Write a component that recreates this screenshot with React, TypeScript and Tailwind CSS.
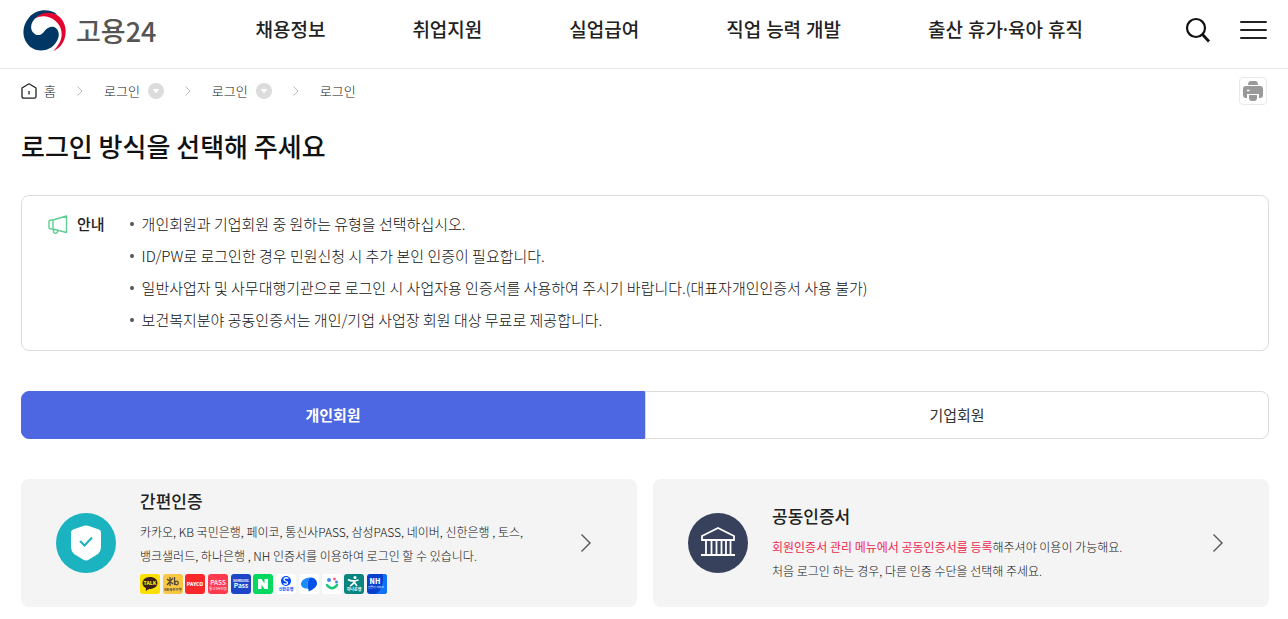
import React, { useState } from 'react';

const NAV_ITEMS = ['채용정보', '취업지원', '실업급여', '직업 능력 개발', '출산 휴가·육아 휴직'];

const NOTICES = [
  '개인회원과 기업회원 중 원하는 유형을 선택하십시오.',
  'ID/PW로 로그인한 경우 민원신청 시 추가 본인 인증이 필요합니다.',
  '일반사업자 및 사무대행기관으로 로그인 시 사업자용 인증서를 사용하여 주시기 바랍니다.(대표자개인인증서 사용 불가)',
  '보건복지분야 공동인증서는 개인/기업 사업장 회원 대상 무료로 제공합니다.',
];

const TABS = ['개인회원', '기업회원'];

const Emblem = () => (
  <svg viewBox="0 0 128 122" className="h-[41px] w-[43px]" aria-hidden="true">
    <path
      fill="#003764"
      d="M100 12C80-4 40-4 18 22C-6 50-4 88 22 110C46 128 80 122 96 100C108 84 110 68 100 56C90 46 76 50 66 60C56 74 46 78 36 72C22 64 20 46 32 30C46 12 76 6 100 14Z"
    />
    <path
      fill="#e4032e"
      d="M36 25C54 6 80 4 100 14C124 28 132 58 124 84C118 102 108 114 90 122C112 100 120 78 112 54C102 26 66 8 36 25Z"
    />
  </svg>
);

const ChevronSmall = () => (
  <svg viewBox="0 0 6 10" className="h-[10px] w-[6px]" fill="none" stroke="#bbb" aria-hidden="true">
    <path d="M.5 .5L5 5L.5 9.5" />
  </svg>
);

const ChevronLarge = () => (
  <svg viewBox="0 0 11 20" className="h-5 w-[11px] shrink-0" fill="none" stroke="#555" strokeWidth="1.4" aria-hidden="true">
    <path d="M1.500 1.500L10 10L1.500 18.500" />
  </svg>
);

const DropButton = ({ label }: { label: string }) => (
  <button type="button" aria-label={label} className="size-4 rounded-full bg-[#dcdcdc]">
    <svg viewBox="0 0 16 16" aria-hidden="true">
      <path fill="#fff" stroke="#fff" strokeLinejoin="round" d="M5.500 6.500H10.500L8 9.800Z" />
    </svg>
  </button>
);

const Header = () => (
  <header className="border-b border-[#e9e9e9]">
    <div className="flex h-[68px] items-start pl-[23px] pr-[21px] pt-[10px]">
      <a href="#" className="flex items-center gap-[10px]">
        <Emblem />
        <span className="text-[27px] leading-[38px] font-medium text-[#555]">고용24</span>
      </a>
      <nav className="ml-[99px] flex gap-[87px] font-['Noto_Sans','Noto_Sans_CJK_KR',sans-serif]">
        {NAV_ITEMS.map((item) => (
          <a key={item} href="#" className="text-[19px] leading-[41px] font-medium whitespace-nowrap text-[#222]">
            {item}
          </a>
        ))}
      </nav>
      <div className="ml-auto flex h-10 items-center gap-[29px]">
        <button type="button" aria-label="검색">
          <svg viewBox="0 0 26 26" className="size-[26px]" fill="none" stroke="#111" strokeWidth="2.200">
            <circle cx="11" cy="11" r="9" />
            <path d="M17.500 17.500L24 24.500" strokeWidth="2.800" />
          </svg>
        </button>
        <button type="button" aria-label="전체메뉴">
          <svg viewBox="0 0 27 20" className="h-5 w-[27px]" stroke="#222" strokeWidth="2" strokeLinecap="round">
            <path d="M1 2H26M1 10H26M1 18H26" />
          </svg>
        </button>
      </div>
    </div>
  </header>
);

const Breadcrumb = () => (
  <div className="flex h-11 items-center justify-between pr-[2px]">
    <nav aria-label="현재 위치" className="flex items-center text-[13px] leading-5 font-light text-[#111]">
      <a href="#" className="flex items-center gap-[7px]">
        <svg viewBox="0 0 16 16" className="size-4" fill="none" stroke="#222" strokeWidth="1.300" strokeLinejoin="round" aria-hidden="true">
          <path d="M8 .8L15 5V13.500Q15 15.200 13.300 15.200H2.700Q1 15.200 1 13.500V5ZM8 8V11.500" />
        </svg>
        홈
      </a>
      <span className="mx-[21px]"><ChevronSmall /></span>
      <a href="#" className="mr-2">로그인</a>
      <DropButton label="대메뉴 열기" />
      <span className="mx-[21px]"><ChevronSmall /></span>
      <a href="#" className="mr-2">로그인</a>
      <DropButton label="중메뉴 열기" />
      <span className="mx-[21px]"><ChevronSmall /></span>
      <span aria-current="page">로그인</span>
    </nav>
    <button type="button" aria-label="인쇄" className="flex size-7 items-center justify-center rounded-sm border border-[#e9e9e9]">
      <svg viewBox="0 0 20 20" className="size-5" aria-hidden="true">
        <path fill="#999" d="M5 4Q5 0 8 0H12Q15 0 15 4ZM3 5H17Q20 5 20 8V14Q20 17 17 17H16V13H4V17H3Q0 17 0 14V8Q0 5 3 5Z" />
        <path fill="#999" d="M6 14H14V17Q14 20 11 20H9Q6 20 6 17Z" />
        <path stroke="#fff" strokeWidth="1.500" d="M4 9.500H6.500" />
      </svg>
    </button>
  </div>
);

const Notice = () => (
  <section className="mt-[29px] flex rounded-lg border border-[#dcdcdc] pt-3 pr-6 pb-[14px] pl-[26px]">
    <h2 className="flex h-8 shrink-0 items-center gap-[9px] text-[15px] font-medium text-[#222]">
      <svg viewBox="0 0 20 20" className="size-5" fill="none" stroke="#5fce92" strokeWidth="1.400" strokeLinejoin="round" aria-hidden="true">
        <path d="M5 6L18.500 2V18.500L5 15H3Q1 15 1 13V8Q1 6 3 6ZM5 6V15M5.500 15.500V17.500Q5.500 19.200 7 19.200H8Q9.500 19.200 9.500 17.500V16.500" />
      </svg>
      안내
    </h2>
    <ul className="ml-[25px] text-[15px] leading-8 font-light text-[#111]">
      {NOTICES.map((notice) => (
        <li key={notice} className="flex gap-2">
          <span className="mt-[14px] size-1 shrink-0 rounded-full bg-[#555]" />
          {notice}
        </li>
      ))}
    </ul>
  </section>
);

const MemberTabs = () => {
  const [active, setActive] = useState(0);

  return (
    <div role="tablist" className="mt-10 grid h-12 grid-cols-2">
      {TABS.map((tab, index) => (
        <button
          key={tab}
          type="button"
          role="tab"
          aria-selected={index === active}
          onClick={() => setActive(index)}
          className={`border text-[15px] first:rounded-l-lg last:rounded-r-lg ${
            index === active ? 'border-[#4d66e1] bg-[#4d66e1] font-bold text-white' : 'border-[#dcdcdc] bg-white text-[#333]'
          }`}
        >
          {tab}
        </button>
      ))}
    </div>
  );
};

const Badge = ({ fill, children }: { fill: string; children: React.ReactNode }) => (
  <svg viewBox="0 0 20 20" className="size-5" textAnchor="middle" aria-hidden="true">
    <rect width="20" height="20" rx="3" fill={fill} />
    {children}
  </svg>
);

const AuthBadges = () => (
  <div className="mt-[6px] flex w-[247px] justify-between pb-1">
    <Badge fill="#f9e000">
      <path fill="#3b1f1e" d="M10 3C5.500 3 2.500 5.800 2.500 9C2.500 11.500 4 13.200 6 14.200L5.800 17L9 15C14 15 17.500 12.500 17.500 9C17.500 5.500 14.500 3 10 3Z" />
      <text x="10" y="11" fontSize="5" fontWeight="900" fill="#f9e000">TALK</text>
    </Badge>
    <Badge fill="#fbc846">
      <path stroke="#54483b" strokeWidth="1.300" fill="none" d="M4 5L10 10M10 4L4 11M7 3V12M11.500 3V11" />
      <circle cx="13.500" cy="9" r="1.800" stroke="#54483b" strokeWidth="1.300" fill="none" />
      <text x="10" y="16.500" fontSize="3.500" fontWeight="700" fill="#54483b">KB국민은행</text>
    </Badge>
    <Badge fill="#fa2828">
      <text x="10" y="12" fontSize="5" fontWeight="900" fill="#fff">PAYCO</text>
    </Badge>
    <Badge fill="#ff3a4f">
      <text x="10" y="10.500" fontSize="6.500" fontWeight="500" fill="#fff">PASS</text>
      <text x="10" y="16" fontSize="3.500" fill="#fff">통신3사인증</text>
    </Badge>
    <Badge fill="#1e46c8">
      <text x="10" y="7.500" fontSize="3.200" fontWeight="700" fill="#fff">SAMSUNG</text>
      <text x="10" y="14" fontSize="6.500" fontWeight="700" fill="#fff">Pass</text>
    </Badge>
    <Badge fill="#04d85e">
      <path fill="#fff" d="M5 5H8.500L11.500 9.500V5H15V15H11.500L8.500 10.500V15H5Z" />
    </Badge>
    <Badge fill="#fff">
      <circle cx="10" cy="7" r="5" fill="#0046ff" />
      <path fill="none" stroke="#fff" strokeWidth="1.300" d="M12.500 4.500C9 2.500 6 5.500 9.500 7C13.500 8.500 11 11.500 7.500 9.500" />
      <text x="10" y="17" fontSize="4" fontWeight="700" fill="#0046ff">신한은행</text>
    </Badge>
    <Badge fill="#fff">
      <path fill="#1b8bff" d="M11 3.500C5 4 2 7 2 10C2 13 5 15 9 14.500C8 10 8.500 6 11 3.500Z" />
      <path fill="#0050e8" d="M11 3.500C15 3 18 6 18 9.500C18 13 14 15.500 9.500 17.500C10 16 9.500 15.500 9 14.500C8 10 8.500 6 11 3.500Z" />
    </Badge>
    <Badge fill="#fff">
      <circle cx="7" cy="6" r="2" fill="#3a8bf5" />
      <circle cx="12.500" cy="5" r="1.500" fill="#ff6286" />
      <circle cx="14.500" cy="8" r="1.500" fill="#3a8bf5" />
      <path fill="none" stroke="#19c97a" strokeWidth="2.500" strokeLinecap="round" d="M5 11Q10 17.500 15 11" />
    </Badge>
    <Badge fill="#098580">
      <circle cx="11" cy="3.500" r="1.500" fill="#fff" />
      <path fill="none" stroke="#fff" strokeWidth="1.600" d="M4 5.500Q8 8 14.500 6M10 7Q10 10 6 12M10 7Q11 10 13 12" />
      <text x="10" y="17" fontSize="4" fontWeight="700" fill="#fff">하나은행</text>
    </Badge>
    <Badge fill="#0641ce">
      <path fill="#0d72f5" d="M9 20Q17 15 16 0H17Q20 0 20 3V17Q20 20 17 20Z" />
      <text x="8" y="10" fontSize="7" fontWeight="900" fill="#fff">NH</text>
      <text x="9" y="14" fontSize="2.800" fill="#fff">인증서 서비스</text>
    </Badge>
  </div>
);

interface AuthCardProps {
  title: string;
  iconBg: string;
  icon: React.ReactNode;
  children: React.ReactNode;
}

const AuthCard = ({ title, iconBg, icon, children }: AuthCardProps) => (
  <a href="#" className="flex min-h-32 items-center gap-6 rounded-lg bg-[#f4f4f4] pr-[46px] pl-[35px]">
    <span className={`flex size-15 shrink-0 items-center justify-center rounded-full ${iconBg}`}>{icon}</span>
    <div className="flex-1 text-[#111]">
      <h3 className="mb-[7px] text-[17px] leading-6 font-medium text-[#222]">{title}</h3>
      {children}
    </div>
    <ChevronLarge />
  </a>
);

const ShieldIcon = () => (
  <svg viewBox="0 0 60 60" className="size-15" aria-hidden="true">
    <path fill="#fff" d="M28 12.800Q30 12 32 12.800L43 16.500Q45 17.500 45 19.500V34Q45 38 42 41L33 46.500Q30 48.500 27 46.500L18 41Q15 38 15 34V19.500Q15 17.500 17 16.500Z" />
    <path fill="none" stroke="#1ab3bf" strokeWidth="2" d="M24 28L28.500 32.500L36 24.500" />
  </svg>
);

const BankIcon = () => (
  <svg viewBox="0 0 60 60" className="size-15" fill="none" stroke="#fff" strokeWidth="1.800" aria-hidden="true">
    <path d="M14 23L30 15L46 23V27H14ZM13 42H47M18 27V42M23.500 27V42M28.500 27V42M33.500 27V42M38 27V42M42.500 27V42" />
  </svg>
);

export default function App() {
  return (
    <div className="min-h-screen bg-white font-['Noto_Sans_CJK_KR',sans-serif] break-keep">
      <Header />
      <main className="pr-[19px] pb-3 pl-[21px]">
        <Breadcrumb />
        <h1 className="mt-[13px] text-[26px] leading-10 font-medium text-[#111]">로그인 방식을 선택해 주세요</h1>
        <Notice />
        <MemberTabs />
        <div className="mt-10 grid grid-cols-2 gap-4">
          <AuthCard title="간편인증" iconBg="bg-[#1ab3bf]" icon={<ShieldIcon />}>
            <p className="text-[12px] leading-6 font-light">
              카카오, KB 국민은행, 페이코, 통신사PASS, 삼성PASS, 네이버, 신한은행 , 토스,
              <br />
              뱅크샐러드, 하나은행 , NH 인증서를 이용하여 로그인 할 수 있습니다.
            </p>
            <AuthBadges />
          </AuthCard>
          <AuthCard title="공동인증서" iconBg="bg-[#38415c]" icon={<BankIcon />}>
            <p className="text-[12px] leading-6 font-light">
              <span className="font-normal text-[#ee2a50]">회원인증서 관리 메뉴에서 공동인증서를 등록</span>해주셔야 이용이 가능해요.
              <br />
              처음 로그인 하는 경우, 다른 인증 수단을 선택해 주세요.
            </p>
          </AuthCard>
        </div>
      </main>
    </div>
  );
}
